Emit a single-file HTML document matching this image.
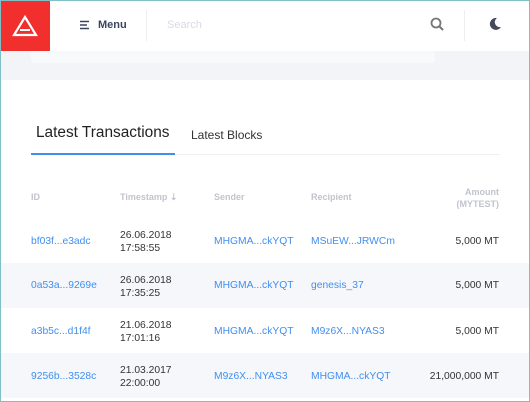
<!DOCTYPE html>
<html><head><style>
*{margin:0;padding:0;box-sizing:border-box}
body{width:530px;height:402px;overflow:hidden;font-family:"Liberation Sans",sans-serif;background:#fff;position:relative}
.frame{position:absolute;inset:0;border:1px solid #7fc0c8;pointer-events:none;z-index:10}
.hdr{position:absolute;left:0;top:0;width:530px;height:51px;background:#fff;z-index:2}
.logo{position:absolute;left:1px;top:1px;width:49px;height:50px;background:#f1302e}
.gray{position:absolute;left:0;top:51px;width:530px;height:29px;background:#f3f4f8}
.card{position:absolute;left:31px;top:51px;width:404px;height:12px;background:#f8f9fb;border-radius:3px}
.t{position:absolute;font-size:10.3px}
.blue{color:#3f8ff0}
.dark{color:#333}
.hd{color:#c0c4cc;font-size:9px;font-weight:bold}
.row{position:absolute;left:1px;width:528px;height:45px}
</style></head><body>
<div class="hdr">
<div class="logo"><svg width="49" height="50"><path d="M24 16 L13 34 L35 34 Z" fill="none" stroke="#fff" stroke-width="2.2"/><path d="M19 29 H29" stroke="#fff" stroke-width="2"/></svg></div>
<svg style="position:absolute;left:80px;top:20px" width="10" height="10"><path d="M0 1.5H9M0 5H7M0 8.5H9" stroke="#3a4560" stroke-width="1.6"/></svg>
<div class="t" style="left:98px;top:19px;font-weight:bold;color:#3a4560;font-size:11px">Menu</div>
<div style="position:absolute;left:146px;top:10px;width:1px;height:31px;background:#eee"></div>
<div class="t" style="left:167px;top:19px;color:#d8dbe5;font-size:11px">Search</div>
<svg style="position:absolute;left:430px;top:17px" width="14" height="14"><circle cx="6" cy="6" r="4.5" fill="none" stroke="#777" stroke-width="1.8"/><path d="M9.5 9.5L13 13" stroke="#777" stroke-width="2"/></svg>
<div style="position:absolute;left:464px;top:10px;width:1px;height:31px;background:#eee"></div>
<svg style="position:absolute;left:488px;top:17px" width="14" height="14"><path d="M9 1A6 6 0 1 0 13 10A5 5 0 0 1 9 1Z" fill="#444a58"/></svg>
</div>
<div class="gray"></div>
<div class="card"></div>
<div class="t" style="left:36px;top:124px;font-size:15.4px;color:#222">Latest Transactions</div>
<div class="t" style="left:191px;top:128px;font-size:12px;color:#333">Latest Blocks</div>
<div style="position:absolute;left:31px;top:154px;width:469px;height:1px;background:#eef0f4"></div>
<div style="position:absolute;left:31px;top:153px;width:144px;height:2px;background:#3f8ff0"></div>
<div class="t hd" style="left:31px;top:192px">ID</div>
<div class="t hd" style="left:120px;top:192px">Timestamp ⇣</div>
<div class="t hd" style="left:214px;top:192px">Sender</div>
<div class="t hd" style="left:311px;top:192px">Recipient</div>
<div class="t hd" style="right:31px;top:186px;text-align:right;line-height:12px">Amount<br>(MYTEST)</div>
<div class="row" style="top:263px;background:#f6f7fa"></div>
<div class="row" style="top:353px;background:#f6f7fa"></div>
<div class="t blue" style="left:31px;top:236px">bf03f...e3adc</div>
<div class="t dark" style="left:120px;top:229px;line-height:13px">26.06.2018<br>17:58:55</div>
<div class="t blue" style="left:214px;top:236px">MHGMA...ckYQT</div>
<div class="t blue" style="left:311px;top:236px">MSuEW...JRWCm</div>
<div class="t dark" style="right:31px;top:236px">5,000 MT</div>
<div class="t blue" style="left:31px;top:280px">0a53a...9269e</div>
<div class="t dark" style="left:120px;top:274px;line-height:13px">26.06.2018<br>17:35:25</div>
<div class="t blue" style="left:214px;top:280px">MHGMA...ckYQT</div>
<div class="t blue" style="left:311px;top:280px">genesis_37</div>
<div class="t dark" style="right:31px;top:280px">5,000 MT</div>
<div class="t blue" style="left:31px;top:326px">a3b5c...d1f4f</div>
<div class="t dark" style="left:120px;top:319px;line-height:13px">21.06.2018<br>17:01:16</div>
<div class="t blue" style="left:214px;top:326px">MHGMA...ckYQT</div>
<div class="t blue" style="left:311px;top:326px">M9z6X...NYAS3</div>
<div class="t dark" style="right:31px;top:326px">5,000 MT</div>
<div class="t blue" style="left:31px;top:371px">9256b...3528c</div>
<div class="t dark" style="left:120px;top:364px;line-height:13px">21.03.2017<br>22:00:00</div>
<div class="t blue" style="left:214px;top:371px">M9z6X...NYAS3</div>
<div class="t blue" style="left:311px;top:371px">MHGMA...ckYQT</div>
<div class="t dark" style="right:31px;top:371px">21,000,000 MT</div>
<div class="frame"></div>
</body></html>
